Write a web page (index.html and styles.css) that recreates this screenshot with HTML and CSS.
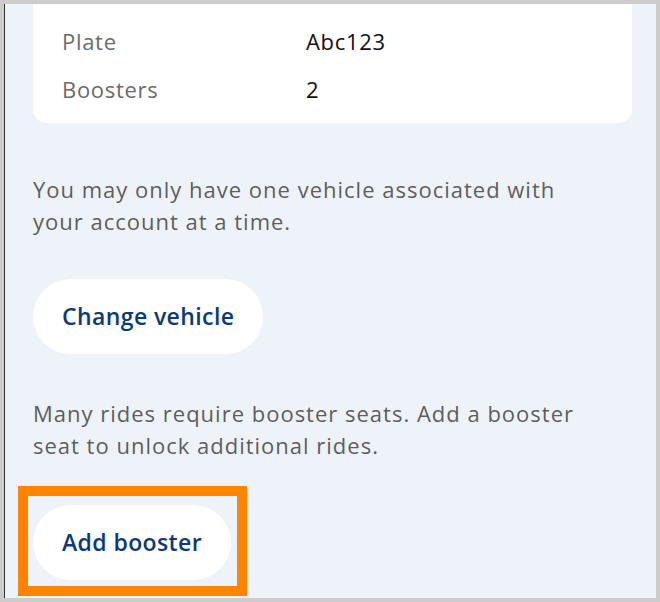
FILE: index.html
```html
<!DOCTYPE html>
<html lang="en">
<head>
    <title>Vehicle</title>
    <meta charset="utf-8">
    <meta name="viewport" content="width=device-width, initial-scale=1">
    <link rel="stylesheet" href="styles.css">
</head>
<body>
    <div class="screen">
        <div class="card">
            <div class="row">
                <span class="label">Plate</span>
                <span class="value">Abc123</span>
            </div>
            <div class="row">
                <span class="label">Boosters</span>
                <span class="value">2</span>
            </div>
        </div>

        <p class="note note-vehicle">You may only have one vehicle associated with your account at a time.</p>
        <button class="pill-btn">Change vehicle</button>

        <p class="note note-booster">Many rides require booster seats. Add a booster seat to unlock additional rides.</p>
        <div class="highlight">
            <button class="pill-btn">Add booster</button>
        </div>
    </div>
</body>
</html>
```

FILE: styles.css
```css
:root {
    --frame-color: #cccccc;
    --bg-color: #eef3fa;
    --card-bg: #ffffff;
    --label-color: #6b6b6b;
    --text-color: #5e5e5e;
    --value-color: #111111;
    --accent-color: #0d3a74;
    --highlight-color: #ff8400;
}

* {
    margin: 0;
    padding: 0;
    box-sizing: border-box;
}

body {
    font-family: "Open Sans", "Liberation Sans", sans-serif;
    background-color: var(--frame-color);
    padding: 4px 4px 4px 4px;
    height: 602px;
    overflow: hidden;
}

.screen {
    height: 594px;
    background-color: var(--bg-color);
    border-left: 1px solid #333;
    padding-left: 28px;
    padding-right: 24px;
    overflow: hidden;
}

.card {
    background-color: var(--card-bg);
    border-radius: 14px;
    margin-top: -20px;
    padding: 33px 29px 10px;
}

.row {
    display: grid;
    grid-template-columns: 244px 1fr;
    height: 48px;
    align-items: center;
    font-size: 22px;
    letter-spacing: 0.7px;
}

.label {
    color: var(--label-color);
}

.value {
    color: var(--value-color);
}

.note {
    font-size: 22px;
    letter-spacing: 1px;
    line-height: 32px;
    color: var(--text-color);
    max-width: 568px;
}

.note-vehicle {
    margin-top: 50px;
}

.note-booster {
    margin-top: 43px;
}

.pill-btn {
    display: block;
    font-family: inherit;
    font-size: 23px;
    font-weight: 600;
    letter-spacing: 0.4px;
    line-height: 27px;
    color: var(--accent-color);
    background-color: var(--card-bg);
    border: none;
    border-radius: 38px;
    padding: 24px 29px;
    margin-top: 42px;
}

.highlight {
    display: inline-block;
    border: 10px solid var(--highlight-color);
    padding: 9px 6px 6px 5px;
    margin-top: 25px;
    margin-left: -15px;
}

.highlight .pill-btn {
    margin-top: 0;
}
```
